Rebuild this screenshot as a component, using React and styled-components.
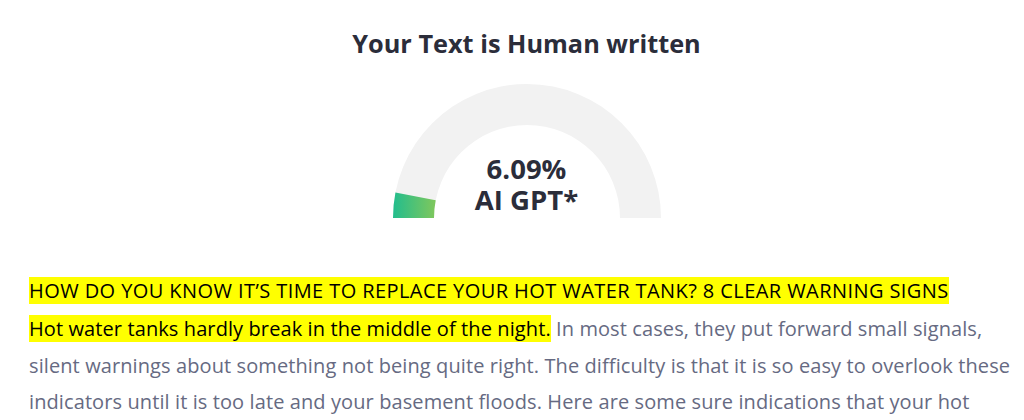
import React from 'react';
import styled, { createGlobalStyle } from 'styled-components';

const GlobalStyle = createGlobalStyle`
  body {
    margin: 0;
    background: #fff;
    font-family: "Open Sans", "Noto Sans", sans-serif;
  }
`;

const Page = styled.div`
  width: 1024px;
  height: 420px;
  overflow: hidden;
  box-sizing: border-box;
  padding-left: 29px;
  display: flex;
  flex-direction: column;
  align-items: center;
`;

const Title = styled.h2`
  margin: 26px 0 0;
  font-size: 25.3px;
  font-weight: 700;
  color: #2b2d3a;
  line-height: 34px;
`;

const GaugeWrap = styled.div`
  position: relative;
  width: 268px;
  height: 135px;
  margin-top: 24px;
`;

const GaugeLabel = styled.div`
  position: absolute;
  left: 0;
  right: 0;
  bottom: 4px;
  text-align: center;
  font-size: 27.5px;
  font-weight: 700;
  line-height: 31px;
  color: #2b2d3a;
`;

const Article = styled.div`
  align-self: stretch;
  padding: 54px 12px 0 0;
`;

const Heading = styled.p`
  margin: 0;
  font-size: 20px;
  letter-spacing: 0.42px;
  line-height: 36px;
  color: #000;
`;

const Body = styled.p`
  margin: 2px 0 0;
  font-size: 20px;
  letter-spacing: 0.1px;
  line-height: 36.5px;
  color: #666a82;
`;

const Mark = styled.span`
  background: #ffff00;
  color: #000;
`;

function Gauge({ value }) {
  const cx = 134;
  const cy = 134;
  const R = 134;
  const r = 93;
  const a = (value / 100) * Math.PI;
  const ox = cx - R * Math.cos(a);
  const oy = cy - R * Math.sin(a);
  const ix = cx - r * Math.cos(a);
  const iy = cy - r * Math.sin(a);
  const track = `M ${cx - R} ${cy} A ${R} ${R} 0 0 1 ${cx + R} ${cy} L ${cx + r} ${cy} A ${r} ${r} 0 0 0 ${cx - r} ${cy} Z`;
  const fill = `M ${cx - R} ${cy} A ${R} ${R} 0 0 1 ${ox} ${oy} L ${ix} ${iy} A ${r} ${r} 0 0 0 ${cx - r} ${cy} Z`;
  return (
    <svg width="268" height="135" viewBox="0 0 268 135">
      <defs>
        <linearGradient id="gf" gradientUnits="userSpaceOnUse" x1="0" x2="41" y1="0" y2="0">
          <stop offset="0" stopColor="#22bd8d" />
          <stop offset="1" stopColor="#7cc75e" />
        </linearGradient>
      </defs>
      <path d={track} fill="#f2f2f2" />
      <path d={fill} fill="url(#gf)" />
    </svg>
  );
}

export default function App() {
  return (
    <Page>
      <GlobalStyle />
      <Title>Your Text is Human written</Title>
      <GaugeWrap>
        <Gauge value={6.09} />
        <GaugeLabel>
          6.09%
          <br />
          AI GPT*
        </GaugeLabel>
      </GaugeWrap>
      <Article>
        <Heading>
          <Mark>HOW DO YOU KNOW IT’S TIME TO REPLACE YOUR HOT WATER TANK? 8 CLEAR WARNING SIGNS</Mark>
        </Heading>
        <Body>
          <Mark>Hot water tanks hardly break in the middle of the night.</Mark> In most cases, they put forward small signals,
          silent warnings about something not being quite right. The difficulty is that it is so easy to overlook these
          indicators until it is too late and your basement floods. Here are some sure indications that your hot water
          tank needs replacing.
        </Body>
      </Article>
    </Page>
  );
}
